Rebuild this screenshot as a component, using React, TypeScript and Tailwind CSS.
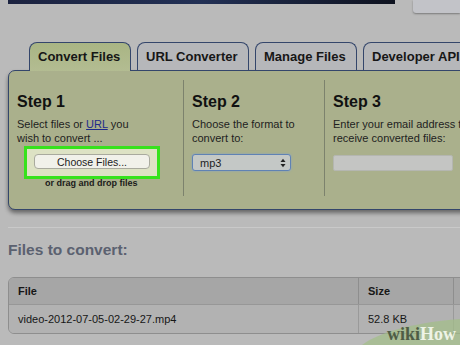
export default function App() {
  const tabBase =
    "h-[28px] whitespace-nowrap rounded-t-[8px] border border-b-0 border-[#34466b] pl-[8px] pt-[6px] text-[13px] font-bold leading-[16px] text-[#161616]";

  return (
    <div
      className="relative h-[345px] w-[460px] overflow-hidden bg-[#bababa]"
      style={{ fontFamily: '"Liberation Sans", Arial, sans-serif' }}
    >
      {/* top strip */}
      <div className="flex h-[14px] items-start">
        <div className="ml-[8px] h-[4px] w-[387px] bg-gradient-to-r from-[#1c2340] via-[#223055] to-[#0f1320]" />
        <div className="ml-auto h-[13px] w-[47px] rounded-bl-[3px] bg-[#c2c3c8] shadow-[0_1px_2px_rgba(0,0,0,0.35)]" />
      </div>

      {/* tabs */}
      <div className="relative z-10 mt-[28px] flex gap-[6px] pl-[29px]">
        <div className={`${tabBase} -mb-px h-[29px] w-[102px] shrink-0 bg-gradient-to-b from-[#a9b584] to-[#b3bc92]`}>
          Convert Files
        </div>
        <div className={`${tabBase} w-[112px] shrink-0 bg-[#b6b7ba]`}>URL Converter</div>
        <div className={`${tabBase} w-[102px] shrink-0 bg-[#b6b7ba]`}>Manage Files</div>
        <div className={`${tabBase} w-[110px] shrink-0 bg-[#b6b7ba]`}>Developer API</div>
      </div>

      {/* convert panel */}
      <div className="ml-[8px] h-[140px] w-[470px] rounded-[7px] border border-[#34466b] bg-[#aab08c] shadow-[0_3px_4px_rgba(0,0,0,0.45)]">
        <div className="flex py-[9px] text-[11px] leading-[14px] text-[#1e1e1e]">
          <div className="h-[116px] w-[175px] shrink-0 border-r border-[#7c826d] pl-[8px]">
            <div className="mt-[12px] text-[16px] font-bold leading-[20px] text-[#111]">Step 1</div>
            <p className="mt-[5px]">
              Select files or <span className="text-[#1d2a8a] underline">URL</span> you
              <br />
              wish to convert ...
            </p>
            <div className="ml-[7px] mt-[1px] h-[33px] w-[136px] border-[3px] border-[#36e21c] bg-[#dde2c4] pl-[7px] pt-[5px]">
              <div className="flex h-[15px] w-[116px] items-center justify-center rounded-[4px] border border-[#a9aa9e] bg-[#f1f1ea] text-[10.5px] text-[#222]">
                Choose Files...
              </div>
            </div>
            <div className="-mt-[2px] ml-[28px] text-[9px] font-bold leading-[12px] text-[#1a1a1a]">
              or drag and drop files
            </div>
          </div>

          <div className="h-[116px] w-[141px] shrink-0 border-r border-[#7c826d] pl-[8px]">
            <div className="mt-[12px] text-[16px] font-bold leading-[20px] text-[#111]">Step 2</div>
            <p className="mt-[5px]">
              Choose the format to
              <br />
              convert to:
            </p>
            <div className="mt-[9px] flex h-[17px] w-[99px] items-center justify-between rounded-[3px] border border-[#5f82b4] bg-[#c4c8c6] pl-[7px] pr-[4px] text-[11px] shadow-[0_0_2px_#7fa0d0]">
              <span>mp3</span>
              <svg width="6" height="10" viewBox="0 0 6 10">
                <path d="M0.5 4L3 0.8L5.5 4Z" fill="#222" />
                <path d="M0.5 6L3 9.2L5.5 6Z" fill="#222" />
              </svg>
            </div>
          </div>

          <div className="h-[116px] w-[150px] shrink-0 pl-[8px]">
            <div className="mt-[12px] text-[16px] font-bold leading-[20px] text-[#111]">Step 3</div>
            <p className="mt-[5px] whitespace-nowrap">
              Enter your email address to
              <br />
              receive converted files:
            </p>
            <div className="mt-[10px] h-[16px] w-[120px] rounded-[2px] border border-[#b4b6b0] bg-[#c4c5c3]" />
          </div>
        </div>
      </div>

      {/* files section */}
      <div className="ml-[8px] mt-[17px] border-t border-[#c9c9c9]" />
      <div className="ml-[8px] mt-[12px] text-[15.5px] font-bold leading-[20px] text-[#5b6170]">
        Files to convert:
      </div>

      <div className="ml-[8px] mt-[17px] w-[470px] overflow-hidden rounded-[6px] border border-[#8e8e8e] text-[11px] text-[#161616]">
        <div className="flex h-[26px] items-center bg-[#a6a6a6] font-bold">
          <div className="flex h-full w-[350px] items-center border-r border-[#8e8e8e] pl-[9px]">File</div>
          <div className="flex h-full w-[95px] items-center border-r border-[#8e8e8e] pl-[9px]">Size</div>
          <div className="flex-1" />
        </div>
        <div className="flex h-[29px] items-center border-t border-[#979797] bg-[#b2b2b2]">
          <div className="flex h-full w-[350px] items-center border-r border-[#9a9a9a] pl-[9px]">
            video-2012-07-05-02-29-27.mp4
          </div>
          <div className="flex h-full w-[95px] items-center border-r border-[#9a9a9a] pl-[9px]">52.8 KB</div>
          <div className="flex-1" />
        </div>
      </div>

      {/* wikiHow watermark */}
      <div className="absolute bottom-0 right-0 h-[30px] w-[100px]">
        <svg className="absolute inset-0" width="100" height="30" viewBox="0 0 100 30">
          <path d="M2 30 C18 18 50 8 100 4 L100 30 Z" fill="#a3bf88" opacity="0.7" />
        </svg>
        <div
          className="absolute bottom-[1px] right-[4px] text-[18px] font-bold leading-[20px]"
          style={{ fontFamily: '"Liberation Serif", "Times New Roman", serif' }}
        >
          <span className="text-[#4e5c45]">wiki</span>
          <span className="text-[#eef3e6]">How</span>
        </div>
      </div>
    </div>
  );
}
